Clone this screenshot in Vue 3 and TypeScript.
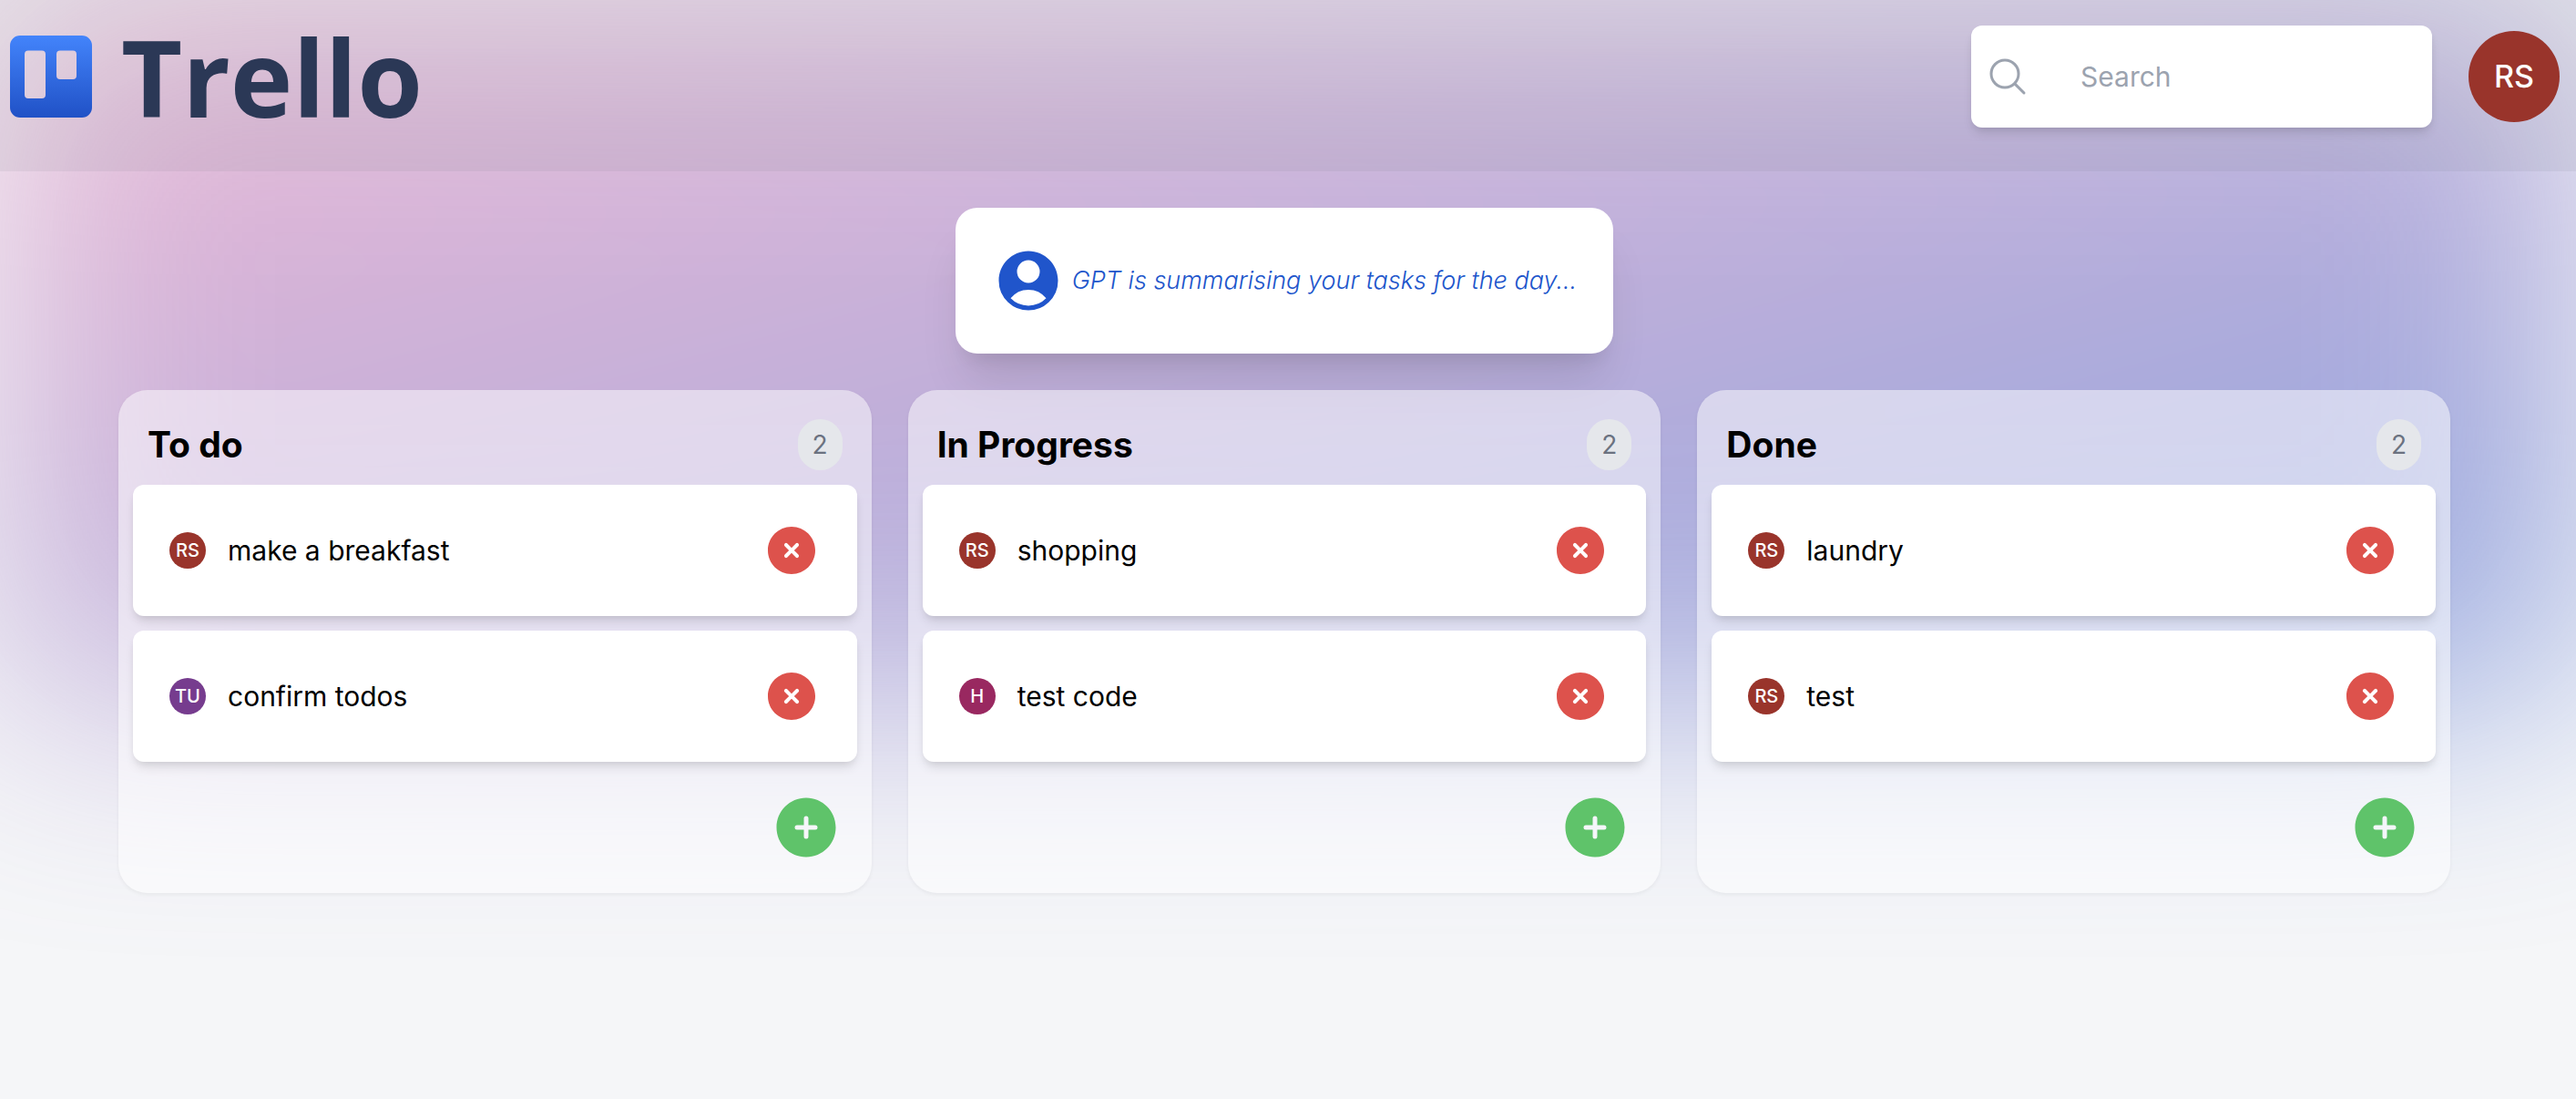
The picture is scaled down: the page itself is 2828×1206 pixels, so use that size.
<script setup lang="ts">
import { ref } from 'vue'

interface Todo {
  title: string
  initials: string
  color: string
}

interface Column {
  id: string
  title: string
  todos: Todo[]
}

const search = ref('')

const columns = ref<Column[]>([
  {
    id: 'todo',
    title: 'To do',
    todos: [
      { title: 'make a breakfast', initials: 'RS', color: '#99342b' },
      { title: 'confirm todos', initials: 'TU', color: '#763c8e' },
    ],
  },
  {
    id: 'inprogress',
    title: 'In Progress',
    todos: [
      { title: 'shopping', initials: 'RS', color: '#99342b' },
      { title: 'test code', initials: 'H', color: '#992860' },
    ],
  },
  {
    id: 'done',
    title: 'Done',
    todos: [
      { title: 'laundry', initials: 'RS', color: '#99342b' },
      { title: 'test', initials: 'RS', color: '#99342b' },
    ],
  },
])

function removeTodo(column: Column, index: number): void {
  column.todos.splice(index, 1)
}
</script>

<template>
  <div class="page">
    <div class="glow" aria-hidden="true"></div>

    <header class="header">
      <a class="logo" href="#" aria-label="Trello">
        <svg class="logo-mark" viewBox="0 0 90 90" aria-hidden="true">
          <defs>
            <linearGradient id="mark" x1="0" y1="0" x2="0" y2="1">
              <stop offset="0" stop-color="#4384fb" />
              <stop offset="1" stop-color="#2051c6" />
            </linearGradient>
          </defs>
          <path
            fill="url(#mark)"
            fill-rule="evenodd"
            d="M11 0H79A11 11 0 0 1 90 11V79A11 11 0 0 1 79 90H11A11 11 0 0 1 0 79V11A11 11 0 0 1 11 0ZM20 16.500A4 4 0 0 0 16 20.500V65A4 4 0 0 0 20 69H35A4 4 0 0 0 39 65V20.500A4 4 0 0 0 35 16.500ZM55 16.500A4 4 0 0 0 51 20.500V44A4 4 0 0 0 55 48H69A4 4 0 0 0 73 44V20.500A4 4 0 0 0 69 16.500Z"
          />
        </svg>
        <span class="logo-word">Trello</span>
      </a>

      <div class="tools">
        <form class="search" role="search" @submit.prevent>
          <svg class="search-icon" viewBox="0 0 24 24" aria-hidden="true">
            <path
              fill="none"
              stroke="currentColor"
              stroke-width="1.5"
              stroke-linecap="round"
              d="M21 21l-5.197-5.197m0 0A7.5 7.5 0 105.196 5.196a7.5 7.5 0 0010.607 10.607z"
            />
          </svg>
          <input v-model="search" type="text" placeholder="Search" aria-label="Search" />
        </form>
        <span class="avatar avatar-large">RS</span>
      </div>
    </header>

    <div class="content">
      <p class="summary">
        <svg class="summary-icon" viewBox="0 0 24 24" aria-hidden="true">
          <path
            fill="currentColor"
            fill-rule="evenodd"
            d="M18.685 19.097A9.723 9.723 0 0021.75 12c0-5.385-4.365-9.75-9.75-9.75S2.25 6.615 2.25 12a9.723 9.723 0 003.065 7.097A9.716 9.716 0 0012 21.75a9.716 9.716 0 006.685-2.653zm-12.54-1.285A7.486 7.486 0 0112 15a7.486 7.486 0 015.855 2.812A8.224 8.224 0 0112 20.25a8.224 8.224 0 01-5.855-2.438zM15.75 9a3.75 3.75 0 11-7.5 0 3.75 3.75 0 017.5 0z"
          />
        </svg>
        <span>GPT is summarising your tasks for the day...</span>
      </p>

      <main class="board">
        <section v-for="column in columns" :key="column.id" class="column">
          <h2 class="column-head">
            <span>{{ column.title }}</span>
            <span class="count">{{ column.todos.length }}</span>
          </h2>

          <ul class="cards">
            <li v-for="(todo, index) in column.todos" :key="todo.title" class="card">
              <span class="avatar" :style="{ backgroundColor: todo.color }">{{ todo.initials }}</span>
              <span class="card-title">{{ todo.title }}</span>
              <button
                class="icon-button remove"
                type="button"
                :aria-label="`Delete ${todo.title}`"
                @click="removeTodo(column, index)"
              >
                <svg viewBox="0 0 24 24" aria-hidden="true">
                  <path
                    fill="currentColor"
                    fill-rule="evenodd"
                    d="M12 2.25c-5.385 0-9.75 4.365-9.75 9.75s4.365 9.75 9.75 9.75 9.75-4.365 9.75-9.75S17.385 2.25 12 2.25zm-1.72 6.97a.75.75 0 10-1.06 1.06L10.94 12l-1.72 1.72a.75.75 0 101.06 1.06L12 13.06l1.72 1.72a.75.75 0 101.06-1.06L13.06 12l1.72-1.72a.75.75 0 10-1.06-1.06L12 10.94l-1.72-1.72z"
                  />
                </svg>
              </button>
            </li>
          </ul>

          <div class="column-foot">
            <button class="icon-button add" type="button" :aria-label="`Add to ${column.title}`">
              <svg viewBox="0 0 24 24" aria-hidden="true">
                <path
                  fill="currentColor"
                  fill-rule="evenodd"
                  d="M12 2.25c-5.385 0-9.75 4.365-9.75 9.75s4.365 9.75 9.75 9.75 9.75-4.365 9.75-9.75S17.385 2.25 12 2.25zM12.75 9a.75.75 0 00-1.5 0v2.25H9a.75.75 0 000 1.5h2.25V15a.75.75 0 001.5 0v-2.25H15a.75.75 0 000-1.5h-2.25V9z"
                />
              </svg>
            </button>
          </div>
        </section>
      </main>
    </div>
  </div>
</template>

<style>
body {
  margin: 0;
  background: #f5f6f8;
}
</style>

<style scoped>
.page {
  position: relative;
  z-index: 0;
  min-height: 100vh;
  overflow: hidden;
  color: #000;
  font-family: Inter, 'Liberation Sans', sans-serif;
  font-size: 30px;
  line-height: 48px;
}

.page *,
.page {
  box-sizing: border-box;
}

/* Blurred colour wash behind the header and the board */
.glow {
  position: absolute;
  inset: 0 0 auto;
  z-index: -1;
  height: 768px;
  border-radius: 12px;
  background: linear-gradient(to bottom right, #e57bb2, #2a58c8);
  filter: blur(128px);
  opacity: 0.5;
}

.header {
  display: flex;
  align-items: flex-start;
  justify-content: space-between;
  padding: 28px 18px 48px 11px;
  background: rgba(107, 114, 128, 0.1);
}

.logo {
  display: flex;
  align-items: center;
  gap: 32px;
  height: 112px;
  color: #2b3856;
  text-decoration: none;
}

.logo-mark {
  width: 90px;
  height: 90px;
}

.logo-word {
  font-family: 'Open Sans', 'Noto Sans', sans-serif;
  font-size: 116px;
  font-weight: 700;
  line-height: 112px;
}

.tools {
  display: flex;
  align-items: center;
  gap: 40px;
}

.search {
  display: flex;
  align-items: center;
  gap: 40px;
  padding: 16px;
  border-radius: 12px;
  background: #fff;
  box-shadow: 0 8px 12px -2px rgba(0, 0, 0, 0.1), 0 4px 8px -4px rgba(0, 0, 0, 0.1);
}

.search-icon {
  width: 48px;
  height: 48px;
  color: #9ca3af;
}

.search input {
  width: 386px;
  height: 80px;
  padding: 16px;
  border: 0;
  outline: 0;
  background: transparent;
  color: inherit;
  font: inherit;
}

.search input::placeholder {
  color: #9ca3af;
  opacity: 1;
}

.avatar {
  display: flex;
  flex: none;
  align-items: center;
  justify-content: center;
  width: 40px;
  height: 40px;
  border-radius: 50%;
  color: #fff;
  font-size: 20px;
  font-weight: 500;
  line-height: 24px;
}

.avatar-large {
  width: 100px;
  height: 100px;
  background: #99342b;
  font-size: 34px;
}

.content {
  padding: 40px 8px 40px 0;
}

.summary {
  display: flex;
  align-items: center;
  gap: 8px;
  width: fit-content;
  margin: 0 auto 40px;
  padding: 40px;
  border-radius: 24px;
  background: #fff;
  box-shadow: 0 40px 50px -10px rgba(0, 0, 0, 0.1), 0 16px 20px -12px rgba(0, 0, 0, 0.1);
  color: #2055cb;
  font-size: 27px;
  font-style: italic;
  font-weight: 300;
  line-height: 40px;
}

.summary-icon {
  width: 80px;
  height: 80px;
}

.board {
  display: grid;
  grid-template-columns: repeat(3, 1fr);
  gap: 40px;
  max-width: 2560px;
  margin: 0 auto;
}

.column {
  padding: 16px;
  border-radius: 32px;
  background: rgba(255, 255, 255, 0.5);
  box-shadow: 0 2px 4px rgba(0, 0, 0, 0.05);
}

.column-head {
  display: flex;
  align-items: center;
  justify-content: space-between;
  margin: 0;
  padding: 16px;
  font-size: 39px;
  font-weight: 700;
  line-height: 56px;
}

.count {
  padding: 8px 16px;
  border-radius: 28px;
  background: #e5e7eb;
  color: #6b7280;
  font-size: 28px;
  font-weight: 400;
  line-height: 40px;
}

.cards {
  display: flex;
  flex-direction: column;
  gap: 16px;
  margin: 0;
  padding: 0;
  list-style: none;
}

.card {
  display: flex;
  align-items: center;
  gap: 24px;
  padding: 40px;
  border-radius: 12px;
  background: #fff;
  box-shadow: 0 8px 12px -2px rgba(0, 0, 0, 0.1), 0 4px 8px -4px rgba(0, 0, 0, 0.1);
}

.card-title {
  flex: 1;
}

.icon-button {
  display: block;
  padding: 0;
  border: 0;
  background: none;
  cursor: pointer;
}

.icon-button svg {
  display: block;
  width: 100%;
  height: 100%;
}

.remove {
  width: 64px;
  height: 64px;
  color: #dd524c;
}

.add {
  width: 80px;
  height: 80px;
  color: #5fc36a;
}

.column-foot {
  display: flex;
  justify-content: flex-end;
  padding: 32px 16px 16px;
}
</style>
